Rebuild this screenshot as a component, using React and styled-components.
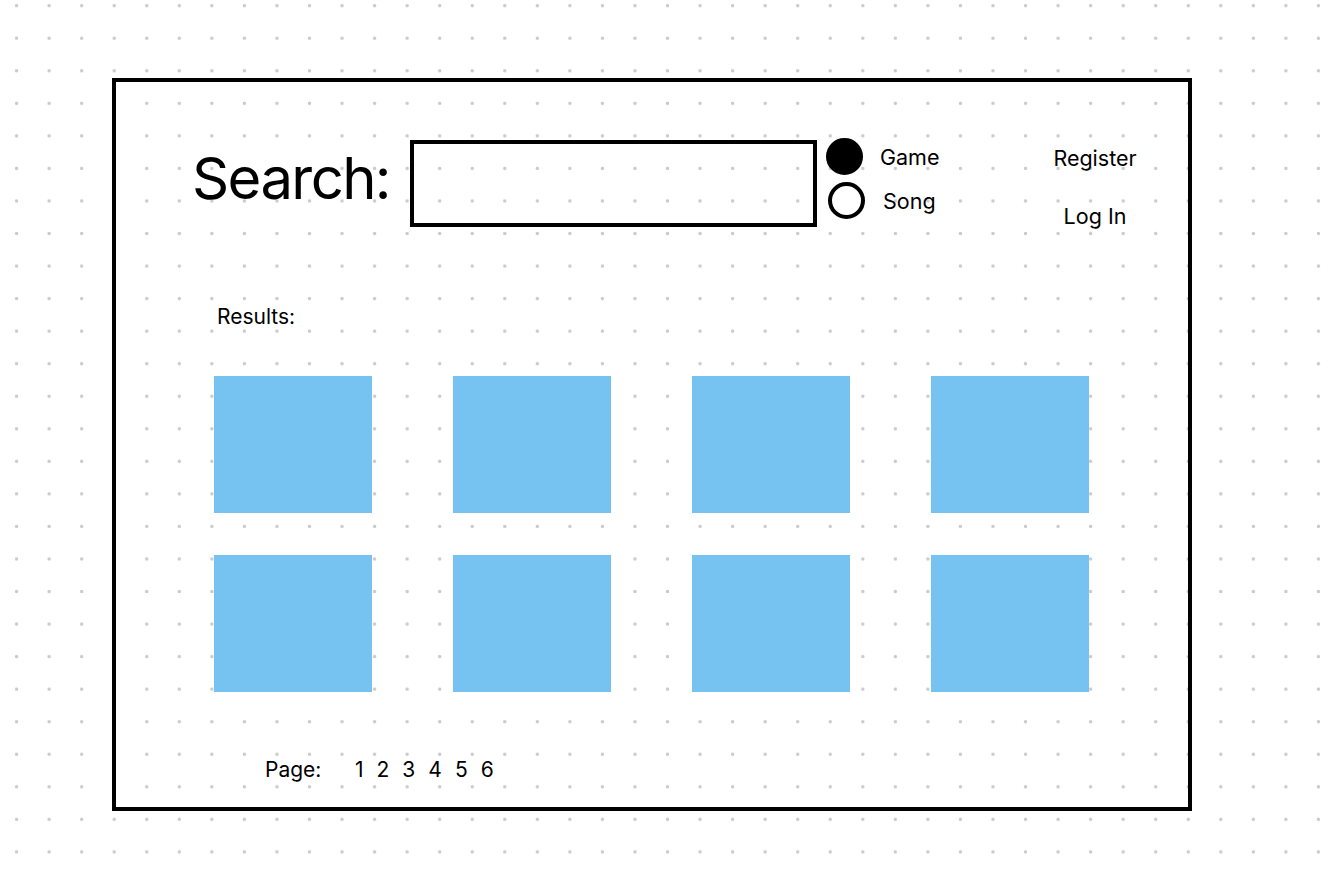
import styled, { createGlobalStyle } from "styled-components";

const GlobalStyle = createGlobalStyle`
  html, body {
    margin: 0;
    padding: 0;
  }

  body {
    min-height: 100vh;
    font-family: "Inter", "Liberation Sans", sans-serif;
    color: #000;
    background-color: #fff;
    background-image: radial-gradient(circle at center, #cacaca 0, #cacaca 1.3px, rgba(255, 255, 255, 0) 2.1px);
    background-size: 32.55px 32.55px;
    background-position: 0.3px -10.6px;
  }
`;

const searchTypes = [
  { label: "Game", checked: true },
  { label: "Song", checked: false },
];

const results = Array.from({ length: 8 }, (_, i) => i);
const pages = [1, 2, 3, 4, 5, 6];

const App = () => {
  return (
    <>
      <GlobalStyle />
      <Frame>
        <Header>
          <SearchLabel>Search:</SearchLabel>
          <SearchBox />
          <TypeOptions>
            {searchTypes.map((type) => (
              <TypeOption key={type.label}>
                <RadioDot $checked={type.checked} />
                <OptionText $checked={type.checked}>{type.label}</OptionText>
              </TypeOption>
            ))}
          </TypeOptions>
          <AuthLinks>
            <AuthLink>Register</AuthLink>
            <AuthLink>Log In</AuthLink>
          </AuthLinks>
        </Header>

        <ResultsLabel>Results:</ResultsLabel>

        <ResultGrid>
          {results.map((id) => (
            <ResultTile key={id} />
          ))}
        </ResultGrid>

        <Pager>
          <PagerLabel>Page:</PagerLabel>
          <PageList>
            {pages.map((page) => (
              <PageNumber key={page}>{page}</PageNumber>
            ))}
          </PageList>
        </Pager>
      </Frame>
    </>
  );
};

export default App;

const Frame = styled.main`
  box-sizing: border-box;
  margin: 78px 0 0 112px;
  width: 1080px;
  height: 733px;
  border: 4px solid #000;
  display: flex;
  flex-direction: column;
`;

const Header = styled.header`
  display: flex;
  align-items: flex-start;
  padding: 58px 0 0 76px;
`;

const SearchLabel = styled.h1`
  margin: 0;
  width: 218px;
  font-size: 58px;
  font-weight: 400;
  line-height: 77px;
  letter-spacing: -1.6px;
`;

const SearchBox = styled.div`
  box-sizing: border-box;
  width: 407px;
  height: 87px;
  border: 4px solid #000;
`;

const TypeOptions = styled.div`
  display: grid;
  row-gap: 7px;
  margin: -2px 0 0 9px;
`;

const TypeOption = styled.label`
  display: flex;
  align-items: center;
`;

const RadioDot = styled.span`
  box-sizing: border-box;
  width: 37px;
  height: 37px;
  border-radius: 50%;
  border: 4px solid #000;
  background: ${({ $checked }) => ($checked ? "#000" : "transparent")};
  margin-left: ${({ $checked }) => ($checked ? "0" : "2px")};
`;

const OptionText = styled.span`
  font-size: 21.5px;
  line-height: 24px;
  margin-left: ${({ $checked }) => ($checked ? "17px" : "18px")};
`;

const AuthLinks = styled.nav`
  margin-left: auto;
  margin-right: 33px;
  width: 120px;
  padding-top: 6px;
  display: grid;
  row-gap: 34px;
  justify-items: center;
`;

const AuthLink = styled.span`
  font-size: 21.5px;
  line-height: 24px;
`;

const ResultsLabel = styled.p`
  margin: 77px 0 0 101px;
  font-size: 21px;
  line-height: 24px;
`;

const ResultGrid = styled.section`
  display: grid;
  grid-template-columns: repeat(4, 157.5px);
  grid-auto-rows: 137px;
  column-gap: 81.5px;
  row-gap: 42px;
  margin: 47px 0 0 98px;
`;

const ResultTile = styled.div`
  background: #76c2f0;
`;

const Pager = styled.footer`
  display: flex;
  align-items: center;
  margin: 66px 0 0 149px;
  font-size: 21px;
  line-height: 24px;
`;

const PagerLabel = styled.span`
  width: 90px;
`;

const PageList = styled.div`
  display: flex;
  gap: 13px;
`;

const PageNumber = styled.span`
  cursor: pointer;
`;
